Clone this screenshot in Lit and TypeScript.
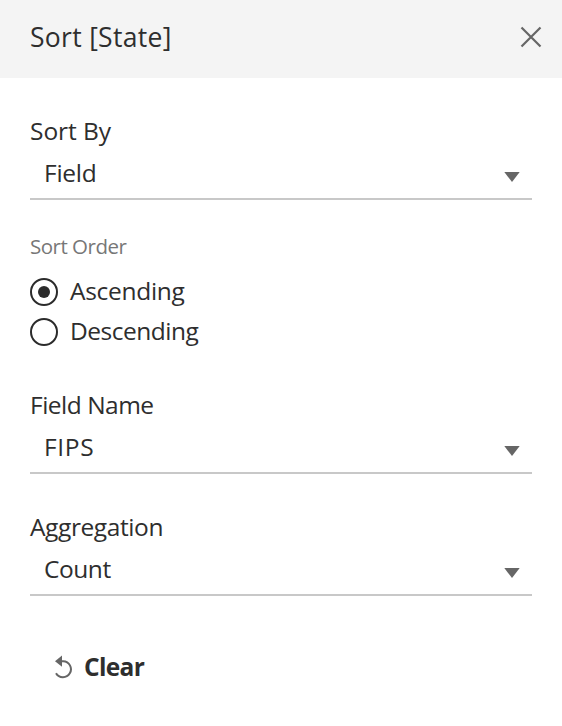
import { LitElement, html, css, svg } from "lit";
import { customElement, property } from "lit/decorators.js";
import { classMap } from "lit/directives/class-map.js";

@customElement("select-field")
class SelectField extends LitElement {
  static styles = css`
    :host { display: block; }
    .label, .value { height: 32px; line-height: 32px; white-space: nowrap; }
    .label { letter-spacing: var(--label-tracking, inherit); }
    .value { letter-spacing: var(--value-tracking, inherit); }
    .box {
      display: flex;
      justify-content: space-between;
      align-items: flex-start;
      height: 41px;
      margin-top: 10px;
      padding: 0 12px 0 14px;
      border-bottom: 2px solid #c8c8c8;
    }
    .arrow { display: block; margin-top: 15px; fill: #666; }
  `;
  @property() label = "";
  @property() value = "";
  render() {
    return html`
      <div class="label">${this.label}</div>
      <div class="box">
        <span class="value">${this.value}</span>
        <svg class="arrow" width="16" height="10" viewBox="0 0 16 10"><path d="M.3 0h15.400L8 10z" /></svg>
      </div>
    `;
  }
}

@customElement("radio-option")
class RadioOption extends LitElement {
  static styles = css`
    :host { display: flex; align-items: center; gap: 12px; height: 40px; }
    svg { display: block; }
    .ring { fill: #fff; stroke: #2b2b2b; stroke-width: 2; }
    .dot { fill: #2b2b2b; }
    .text { line-height: 32px; padding-bottom: 2px; }
  `;
  @property({ type: Boolean }) checked = false;
  @property() label = "";
  render() {
    return html`
      <svg width="28" height="28" viewBox="0 0 28 28">
        <circle class="ring" cx="14" cy="14" r="13" />
        ${this.checked ? svg`<circle class=${classMap({ dot: true })} cx="14" cy="14" r="6" />` : ""}
      </svg>
      <span class="text">${this.label}</span>
    `;
  }
}

@customElement("app-root")
class AppRoot extends LitElement {
  static styles = css`
    :host {
      display: block;
      height: 726px;
      overflow: hidden;
      background: #fff;
      color: #2e2e2e;
      font: 24.5px "Open Sans", "Noto Sans", sans-serif;
      letter-spacing: -0.6px;
    }
    header {
      box-sizing: border-box;
      display: flex;
      justify-content: space-between;
      align-items: flex-start;
      height: 78px;
      padding: 19px 20px 0 30px;
      background: #f4f4f4;
    }
    h1 { margin: 0; font-size: 26.5px; font-weight: 400; line-height: 36px; letter-spacing: 0.3px; }
    .close { display: block; margin-top: 7px; stroke: #666; stroke-width: 2.200; }
    main { padding: 37px 30px 0; }
    .sort-by { --label-tracking: -0.05px; --value-tracking: -0.250px; }
    .caption { margin-top: 30px; color: #777; font-size: 20.5px; line-height: 32px; letter-spacing: -0.5px; }
    .options { margin-top: 10px; }
    .ascending { letter-spacing: -0.3px; }
    .descending { letter-spacing: -0.480px; }
    .name { margin-top: 37px; --label-tracking: -0.5px; --value-tracking: 0.650px; }
    .aggregation { margin-top: 37px; --label-tracking: -0.4px; --value-tracking: -0.450px; }
    .clear {
      display: flex;
      align-items: center;
      gap: 11px;
      margin: 55px 0 0 23px;
      padding: 0;
      border: 0;
      background: none;
      color: inherit;
      font: inherit;
      font-weight: 700;
      line-height: 32px;
      letter-spacing: -0.650px;
    }
  `;
  render() {
    return html`
      <header>
        <h1>Sort [State]</h1>
        <svg class="close" width="22" height="22" viewBox="0 0 22 22"><path d="M1.500 1.500l19 19M20.500 1.500l-19 19" /></svg>
      </header>
      <main>
        <select-field class="sort-by" label="Sort By" value="Field"></select-field>
        <div class="caption">Sort Order</div>
        <div class="options">
          <radio-option class="ascending" label="Ascending" checked></radio-option>
          <radio-option class="descending" label="Descending"></radio-option>
        </div>
        <select-field class="name" label="Field Name" value="FIPS"></select-field>
        <select-field class="aggregation" label="Aggregation" value="Count"></select-field>
        <button class="clear">
          <svg width="20" height="24" viewBox="0 0 20 24">
            <path d="M8 6.200h2.200a8 8 0 1 1-7.200 12" fill="none" stroke="#666" stroke-width="2" />
            <path d="M2 6.200l7-5.600v11.200z" fill="#666" />
          </svg>
          <span>Clear</span>
        </button>
      </main>
    `;
  }
}
